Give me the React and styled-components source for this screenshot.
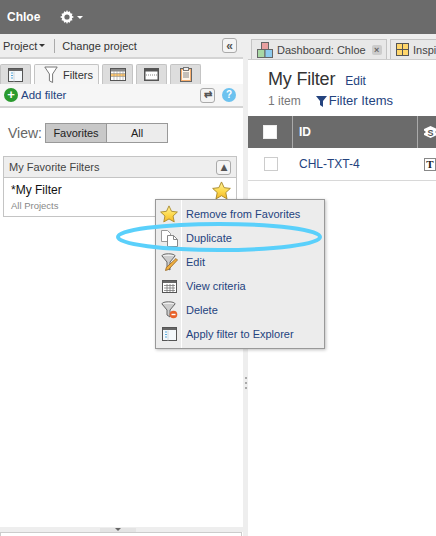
import React from 'react';
import styled, { createGlobalStyle } from 'styled-components';

const GlobalStyle = createGlobalStyle`
  html, body {
    margin: 0;
    padding: 0;
    background: #fff;
    overflow: hidden;
    font-family: "Liberation Sans", Arial, sans-serif;
  }
`;

const Star = ({ size = 20, id }) => (
  <svg width={size} height={size} viewBox="0 0 20 20">
    <defs>
      <linearGradient id={id} x1="0" y1="0" x2="0" y2="1">
        <stop offset="0" stopColor="#fff2a0" />
        <stop offset="0.55" stopColor="#fdd94a" />
        <stop offset="1" stopColor="#f3b52a" />
      </linearGradient>
    </defs>
    <path d="M10 1l2.800 6 6.500.8-4.800 4.400 1.300 6.600L10 15.500l-5.800 3.300 1.300-6.600L.7 7.800 7.200 7z" fill={`url(#${id})`} stroke="#a98a2a" strokeWidth="1" strokeLinejoin="round" />
  </svg>
);

const FunnelOutline = () => (
  <svg width="14" height="18" viewBox="0 0 14 18">
    <path d="M.8 1h12.400L8.600 8v8.500L5.400 14.800V8z" fill="#fff" stroke="#777" strokeWidth="1" strokeLinejoin="round" />
  </svg>
);

const ExplorerIcon = () => (
  <svg width="15" height="14" viewBox="0 0 15 14">
    <rect x=".5" y=".5" width="14" height="13" fill="#f4f8fb" stroke="#555" />
    <rect x="1" y="1" width="13" height="2" fill="#666" />
    <path d="M3 5h2M3 7.500h2M3 10h2" stroke="#5aa9dc" strokeWidth="1.200" />
    <path d="M6 3.500v10" stroke="#cfd8de" />
  </svg>
);

const GridIcon = () => (
  <svg width="16" height="13" viewBox="0 0 16 13">
    <rect x=".5" y=".5" width="15" height="12" fill="#fff" stroke="#555" />
    <rect x="1" y="1" width="14" height="2.500" fill="#888" />
    <rect x="1" y="5.500" width="14" height="3" fill="#fbc46c" />
    <path d="M1 5.500h14M1 8.500h14M4 3v9M7 3v9M10 3v9M13 3v9" stroke="#999" strokeWidth=".6" />
  </svg>
);

const CriteriaIcon = () => (
  <svg width="15" height="13" viewBox="0 0 15 13">
    <rect x=".5" y=".5" width="14" height="12" fill="#fff" stroke="#555" />
    <rect x="1" y="1" width="13" height="2" fill="#666" />
    <path d="M2 5.500h11M2 8h11M2 10.500h11M5 4v8M8 4v8M11 4v8" stroke="#777" strokeWidth=".8" />
  </svg>
);

const WindowIcon = () => (
  <svg width="15" height="13" viewBox="0 0 15 13">
    <rect x=".75" y=".75" width="13.500" height="11.500" fill="#fff" stroke="#555" strokeWidth="1.500" />
    <rect x="1" y="1" width="13" height="2.500" fill="#555" />
    <path d="M2 7h11" stroke="#888" strokeDasharray="1 1" />
  </svg>
);

const ClipboardIcon = () => (
  <svg width="12" height="15" viewBox="0 0 12 15">
    <rect x=".5" y="1.500" width="11" height="13" fill="#f8b070" stroke="#666" />
    <rect x="2" y="3" width="8" height="10" fill="#fff6ea" />
    <rect x="3.500" y=".5" width="5" height="3" fill="#eee" stroke="#777" />
    <path d="M3 6h6M3 8h6M3 10h6" stroke="#888" />
  </svg>
);

const GearIcon = () => (
  <svg width="14" height="14" viewBox="0 0 14 14">
    <path d="M7 0l1 2 1.900-.8.500 2.100 2.100.4-.700 2L14 7l-2.200 1.300.7 2-2.100.4-.5 2.100L8 12l-1 2-1-2-1.900.8-.5-2.100-2.100-.4.7-2L0 7l2.200-1.300-.7-2 2.100-.4.500-2.100L6 2z" fill="#fff" />
    <circle cx="7" cy="7" r="2.600" fill="#6b6b6b" />
  </svg>
);

const Blocks = () => (
  <svg width="16" height="16" viewBox="0 0 16 16" style={{ flex: 'none' }}>
    <rect x="4.500" y=".5" width="7" height="7" fill="#e8a0a0" stroke="#666" />
    <rect x=".5" y="7.500" width="7.500" height="8" fill="#a9d8a5" stroke="#666" />
    <rect x="8" y="7.500" width="7.500" height="8" fill="#8ecbee" stroke="#666" />
  </svg>
);

const Panes = () => (
  <svg width="13" height="13" viewBox="0 0 13 13" style={{ flex: 'none' }}>
    <rect x=".5" y=".5" width="12" height="12" fill="#ffd66b" stroke="#555" />
    <path d="M6.500 0v13M0 6.500h13" stroke="#555" />
  </svg>
);

const CopyIcon = () => (
  <svg width="17" height="17" viewBox="0 0 17 17">
    <path d="M.5.500h6l3 3v8h-9z" fill="#fff" stroke="#999" />
    <path d="M6.500 5.500h6l4 4v7h-10z" fill="#fff" stroke="#888" />
    <path d="M12.500 5.500v4h4" fill="none" stroke="#888" />
  </svg>
);

const FunnelEdit = () => (
  <svg width="17" height="18" viewBox="0 0 17 18">
    <ellipse cx="7.500" cy="2.800" rx="6.500" ry="2" fill="#eee" stroke="#666" />
    <path d="M1 3l5 6v6l3 2V9l5-6" fill="#ccc" stroke="#666" />
    <path d="M15 5.500l1.500 1.500-9 9.500-3 1 .8-3z" fill="#f0b040" stroke="#96621e" strokeWidth=".8" />
  </svg>
);

const FunnelDelete = () => (
  <svg width="17" height="18" viewBox="0 0 17 18">
    <ellipse cx="7.500" cy="2.800" rx="6.500" ry="2" fill="#eee" stroke="#666" />
    <path d="M1 3l5 6v5l3 2V9l5-6" fill="#ccc" stroke="#666" />
    <circle cx="12.500" cy="13.500" r="3.800" fill="#e8622a" />
    <path d="M10.500 13.500h4" stroke="#fff" strokeWidth="1.400" />
  </svg>
);

const LayersIcon = () => (
  <svg width="13" height="12" viewBox="0 0 13 12" style={{ flex: 'none' }}>
    <path d="M6.500 0L13 3v1.500L11 6l2 1.500V9l-6.500 3L0 9V7.500L2 6 0 4.500V3z" fill="#fff" />
    <text x="6.500" y="9.500" textAnchor="middle" fontSize="9" fontWeight="bold" fill="#555" fontFamily="Liberation Sans, sans-serif">S</text>
  </svg>
);

const Page = styled.div`
  position: relative;
  width: 436px;
  height: 536px;
  overflow: hidden;
  display: flex;
  flex-direction: column;
  font-size: 12px;
  color: #333;
`;

const TopBar = styled.div`
  height: 34px;
  background: #6b6b6b;
  display: flex;
  align-items: center;
  padding-left: 7px;
  box-sizing: border-box;
`;

const User = styled.span`
  color: #fff;
  font-weight: bold;
  font-size: 12px;
  width: 53px;
`;

const Caret = styled.span`
  width: 0;
  height: 0;
  border-left: 3px solid transparent;
  border-right: 3px solid transparent;
  border-top: 3px solid ${(p) => p.$color || '#333'};
  margin-left: ${(p) => p.$gap || 2}px;
`;

const Main = styled.div`
  flex: 1;
  display: flex;
  min-height: 0;
`;

const LeftPane = styled.div`
  width: 243px;
  display: flex;
  flex-direction: column;
`;

const Splitter = styled.div`
  width: 5px;
  background: #eee;
  display: flex;
  flex-direction: column;
  align-items: center;
  justify-content: center;
  gap: 3px;
  padding-top: 196px;
  box-sizing: border-box;
`;

const Grip = styled.span`
  width: 2px;
  height: 2px;
  background: #aaa;
`;

const RightPane = styled.div`
  flex: 1;
  min-width: 0;
  display: flex;
  flex-direction: column;
`;

const ProjectBar = styled.div`
  height: 25px;
  box-sizing: border-box;
  background: #eee;
  border-bottom: 2px solid #d4d4d4;
  display: flex;
  align-items: center;
  padding: 0 6px 0 3px;
  font-size: 11px;
`;

const ProjectMenu = styled.span`
  display: flex;
  align-items: center;
  padding-right: 9px;
  border-right: 1px solid #aaa;
  height: 14px;
  margin-right: 7px;
`;

const IconBtn = styled.span`
  margin-left: auto;
  width: 15px;
  height: 15px;
  box-sizing: border-box;
  border: 1px solid #aaa;
  border-radius: 3px;
  background: #f4f4f4;
  display: flex;
  align-items: center;
  justify-content: center;
  color: #555;
  font-size: 12px;
  font-weight: bold;
  line-height: 1;
`;

const TabStrip = styled.div`
  height: 25px;
  background: #fff;
  display: flex;
  align-items: flex-end;
  gap: 3px;
`;

const IconTab = styled.div`
  width: 31px;
  height: 20px;
  box-sizing: border-box;
  background: #ddd;
  border: 1px solid #c4c4c4;
  border-bottom: none;
  border-radius: 2px 2px 0 0;
  display: flex;
  align-items: center;
  justify-content: center;
`;

const ActiveTab = styled.div`
  width: 65px;
  height: 20px;
  box-sizing: border-box;
  background: #f5f5f5;
  border: 1px solid #c4c4c4;
  border-bottom: none;
  border-radius: 2px 2px 0 0;
  display: flex;
  align-items: center;
  gap: 5px;
  padding-left: 9px;
  font-size: 11px;
`;

const Toolbar = styled.div`
  height: 24px;
  box-sizing: border-box;
  background: #f6f6f6;
  border-bottom: 2px solid #d4d4d4;
  display: flex;
  align-items: center;
  padding: 0 7px 0 4px;
  font-size: 11.500px;
  color: #24437e;
`;

const AddIcon = styled.span`
  width: 14px;
  height: 14px;
  border-radius: 50%;
  background: #2a9a2e;
  color: #fff;
  font-weight: bold;
  font-size: 13px;
  line-height: 14px;
  text-align: center;
  margin-right: 3px;
`;

const RefreshBtn = styled(IconBtn)`
  margin-left: auto;
  margin-right: 7px;
  font-size: 10px;
`;

const HelpIcon = styled.span`
  width: 14px;
  height: 14px;
  border-radius: 50%;
  background: #6cc2ef;
  color: #fff;
  font-size: 10px;
  font-weight: bold;
  line-height: 14px;
  text-align: center;
`;

const ViewRow = styled.div`
  display: flex;
  align-items: center;
  padding: 15px 0 0 8px;
  gap: 6px;
`;

const ViewLabel = styled.span`
  font-size: 14px;
  color: #666;
  width: 31px;
`;

const Segments = styled.div`
  display: flex;
  width: 123px;
  height: 20px;
  box-sizing: border-box;
  border: 1px solid #999;
`;

const Segment = styled.div`
  width: ${(p) => (p.$active ? '61px' : 'auto')};
  flex: ${(p) => (p.$active ? 'none' : 1)};
  background: ${(p) => (p.$active ? '#c8c8c8' : '#ececec')};
  border-right: ${(p) => (p.$active ? '1px solid #999' : 'none')};
  box-sizing: border-box;
  display: flex;
  align-items: center;
  justify-content: center;
  font-size: 11px;
  color: #222;
`;

const FavPanel = styled.div`
  margin: 13px 6px 0 3px;
  height: 61px;
  box-sizing: border-box;
  border: 1px solid #c4c4c4;
`;

const FavHeader = styled.div`
  height: 21px;
  box-sizing: border-box;
  background: #eee;
  border-bottom: 1px solid #c4c4c4;
  display: flex;
  align-items: center;
  padding: 0 5px;
  font-size: 11px;
  color: #444;
`;

const FavBody = styled.div`
  display: flex;
  justify-content: space-between;
  padding: 5px 5px 0 7px;
`;

const FavName = styled.div`
  font-size: 12px;
  color: #111;
`;

const FavSub = styled.div`
  font-size: 9.500px;
  color: #888;
  margin-top: 3px;
`;

const FavStar = styled.div`
  margin-top: -2px;
  height: 20px;
`;

const LeftFill = styled.div`
  flex: 1;
`;

const BottomBar = styled.div`
  height: 5px;
  background: #eee;
  display: flex;
  justify-content: center;
  align-items: center;
  padding-right: 8px;
`;

const BottomHandle = styled.span`
  width: 36px;
  height: 4px;
  background: #e4e4e4;
  display: flex;
  justify-content: center;
`;

const BottomEdge = styled.div`
  height: 3px;
  margin-right: 1px;
  border: 1px solid #ccc;
  border-bottom: none;
`;

const DocTabs = styled.div`
  height: 26px;
  box-sizing: border-box;
  background: #eee;
  border-bottom: 1px solid #ccc;
  display: flex;
  align-items: flex-end;
  gap: 3px;
  padding-left: 3px;
  overflow: hidden;
`;

const DocTab = styled.div`
  flex: none;
  height: 20px;
  width: ${(p) => p.$w}px;
  box-sizing: border-box;
  border: 1px solid #c4c4c4;
  border-bottom: none;
  background: #e8e8e8;
  display: flex;
  align-items: center;
  gap: 4px;
  padding-left: 5px;
  font-size: 11px;
  color: #444;
  white-space: nowrap;
`;

const CloseBox = styled.span`
  width: 10px;
  height: 10px;
  background: #ccc;
  border-radius: 2px;
  color: #666;
  font-size: 9px;
  font-weight: bold;
  line-height: 10px;
  text-align: center;
  margin-left: 2px;
`;

const Heading = styled.div`
  padding: 9px 0 0 20px;
  height: 56px;
  box-sizing: border-box;
`;

const TitleRow = styled.div`
  display: flex;
  align-items: baseline;
  gap: 10px;
`;

const Title = styled.span`
  font-size: 18px;
  letter-spacing: -0.2px;
  color: #333;
`;

const LinkText = styled.span`
  font-size: 12px;
  color: #24437e;
`;

const SubRow = styled.div`
  display: flex;
  align-items: center;
  gap: 15px;
  margin-top: 3px;
  font-size: 12px;
  color: #777;
`;

const FilterLink = styled(LinkText)`
  display: flex;
  align-items: center;
  gap: 1px;
  font-size: 13px;
`;

const TableHead = styled.div`
  height: 32px;
  background: #6b6b6b;
  display: flex;
  color: #fff;
  font-weight: bold;
  font-size: 12px;
`;

const CheckCell = styled.div`
  width: 45px;
  flex: none;
  box-sizing: border-box;
  display: flex;
  align-items: center;
  justify-content: center;
  border-right: ${(p) => (p.$head ? '1px solid #aaa' : 'none')};
`;

const Check = styled.span`
  width: 14px;
  height: 14px;
  box-sizing: border-box;
  background: #fff;
  border: 1px solid ${(p) => (p.$head ? '#eee' : '#ccc')};
`;

const IdCell = styled.div`
  width: 125px;
  flex: none;
  box-sizing: border-box;
  display: flex;
  align-items: center;
  padding-left: 6px;
  border-right: ${(p) => (p.$head ? '1px solid #aaa' : 'none')};
`;

const TypeCell = styled.div`
  display: flex;
  align-items: center;
  padding-left: 6px;
`;

const TableRow = styled.div`
  height: 33px;
  box-sizing: border-box;
  border-bottom: 1px solid #d8d8d8;
  display: flex;
  font-size: 12px;
  color: #24437e;
`;

const TypeBox = styled.span`
  width: 12px;
  height: 13px;
  flex: none;
  box-sizing: border-box;
  border: 1px solid #888;
  color: #222;
  font-family: "Liberation Serif", serif;
  font-weight: bold;
  font-size: 11px;
  line-height: 11px;
  text-align: center;
`;

const RightFill = styled.div`
  flex: 1;
  background: #fff;
`;

const Menu = styled.div`
  position: absolute;
  left: 155px;
  top: 199px;
  width: 170px;
  height: 150px;
  box-sizing: border-box;
  background: #ececec;
  border: 1px solid #999;
  box-shadow: 1px 1px 3px rgba(0, 0, 0, 0.25);
  padding-top: 2px;
  &::before {
    content: '';
    position: absolute;
    left: 25px;
    top: 0;
    bottom: 0;
    width: 1px;
    background: #fff;
  }
`;

const MenuItem = styled.div`
  height: 24px;
  display: flex;
  align-items: center;
  font-size: 11px;
  color: #24437e;
`;

const MenuIcon = styled.span`
  width: 26px;
  flex: none;
  display: flex;
  justify-content: center;
  margin-right: 4px;
`;

const Highlight = styled.svg`
  position: absolute;
  left: 114px;
  top: 220px;
  pointer-events: none;
`;

const menuItems = [
  { label: 'Remove from Favorites', icon: <Star size={18} id="starMenu" /> },
  { label: 'Duplicate', icon: <CopyIcon /> },
  { label: 'Edit', icon: <FunnelEdit /> },
  { label: 'View criteria', icon: <CriteriaIcon /> },
  { label: 'Delete', icon: <FunnelDelete /> },
  { label: 'Apply filter to Explorer', icon: <ExplorerIcon /> },
];

export default function App() {
  return (
    <Page>
      <GlobalStyle />
      <TopBar>
        <User>Chloe</User>
        <GearIcon />
        <Caret $color="#fff" $gap={3} />
      </TopBar>
      <Main>
        <LeftPane>
          <ProjectBar>
            <ProjectMenu>
              Project
              <Caret />
            </ProjectMenu>
            Change project
            <IconBtn>«</IconBtn>
          </ProjectBar>
          <TabStrip>
            <IconTab>
              <ExplorerIcon />
            </IconTab>
            <ActiveTab>
              <FunnelOutline />
              Filters
            </ActiveTab>
            <IconTab>
              <GridIcon />
            </IconTab>
            <IconTab>
              <WindowIcon />
            </IconTab>
            <IconTab>
              <ClipboardIcon />
            </IconTab>
          </TabStrip>
          <Toolbar>
            <AddIcon>+</AddIcon>
            Add filter
            <RefreshBtn>⇄</RefreshBtn>
            <HelpIcon>?</HelpIcon>
          </Toolbar>
          <ViewRow>
            <ViewLabel>View:</ViewLabel>
            <Segments>
              <Segment $active>Favorites</Segment>
              <Segment>All</Segment>
            </Segments>
          </ViewRow>
          <FavPanel>
            <FavHeader>
              My Favorite Filters
              <IconBtn>▴</IconBtn>
            </FavHeader>
            <FavBody>
              <div>
                <FavName>*My Filter</FavName>
                <FavSub>All Projects</FavSub>
              </div>
              <FavStar>
                <Star size={19} id="starFav" />
              </FavStar>
            </FavBody>
          </FavPanel>
          <LeftFill />
          <BottomBar>
            <BottomHandle>
              <Caret $color="#666" $gap={1} />
            </BottomHandle>
          </BottomBar>
          <BottomEdge />
        </LeftPane>
        <Splitter>
          <Grip />
          <Grip />
          <Grip />
        </Splitter>
        <RightPane>
          <DocTabs>
            <DocTab $w={136}>
              <Blocks />
              Dashboard: Chloe
              <CloseBox>×</CloseBox>
            </DocTab>
            <DocTab $w={60}>
              <Panes />
              Inspi
            </DocTab>
          </DocTabs>
          <Heading>
            <TitleRow>
              <Title>My Filter</Title>
              <LinkText>Edit</LinkText>
            </TitleRow>
            <SubRow>
              1 item
              <FilterLink>
                <svg width="12" height="12" viewBox="0 0 12 12">
                  <path d="M0 1h11L7 6v6L4 10V6z" fill="#24437e" />
                </svg>
                Filter Items
              </FilterLink>
            </SubRow>
          </Heading>
          <TableHead>
            <CheckCell $head>
              <Check $head />
            </CheckCell>
            <IdCell $head>ID</IdCell>
            <TypeCell>
              <LayersIcon />
            </TypeCell>
          </TableHead>
          <TableRow>
            <CheckCell>
              <Check />
            </CheckCell>
            <IdCell>CHL-TXT-4</IdCell>
            <TypeCell>
              <TypeBox>T</TypeBox>
            </TypeCell>
          </TableRow>
          <RightFill />
        </RightPane>
      </Main>
      <Menu>
        {menuItems.map((item) => (
          <MenuItem key={item.label}>
            <MenuIcon>{item.icon}</MenuIcon>
            {item.label}
          </MenuItem>
        ))}
      </Menu>
      <Highlight width="212" height="34" viewBox="0 0 212 34">
        <ellipse cx="105" cy="17" rx="101" ry="13" fill="none" stroke="#5ad0fb" strokeWidth="4" />
      </Highlight>
    </Page>
  );
}
